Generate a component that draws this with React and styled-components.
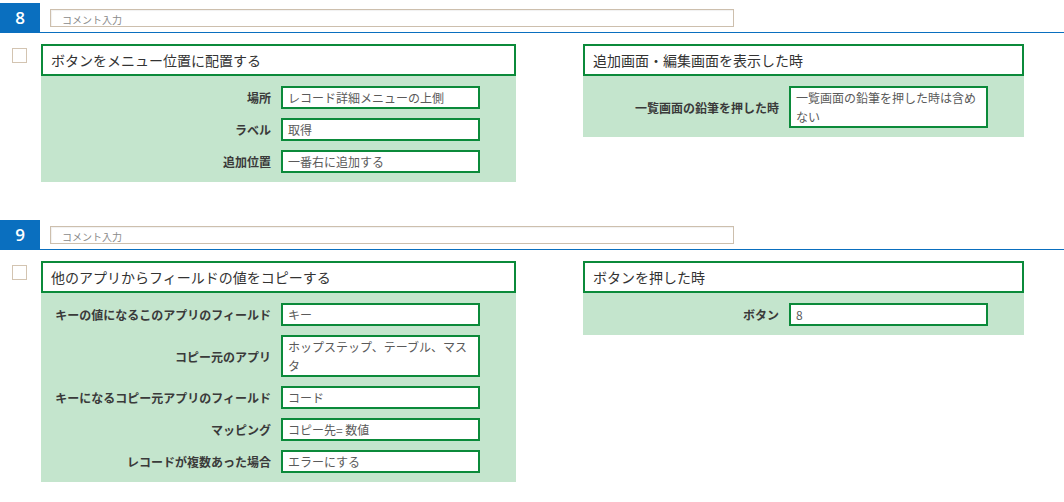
import React from 'react';
import styled, { createGlobalStyle } from 'styled-components';

const GlobalStyle = createGlobalStyle`
  body {
    margin: 0;
    background: #ffffff;
    font-family: 'Noto Sans CJK JP', 'Noto Sans', sans-serif;
    color: #333333;
  }
`;

const sections = [
  {
    no: 8,
    left: {
      title: 'ボタンをメニュー位置に配置する',
      rows: [
        { label: '場所', value: 'レコード詳細メニューの上側' },
        { label: 'ラベル', value: '取得' },
        { label: '追加位置', value: '一番右に追加する' },
      ],
    },
    right: {
      title: '追加画面・編集画面を表示した時',
      rows: [
        {
          label: '一覧画面の鉛筆を押した時',
          value: '一覧画面の鉛筆を押した時は含めない',
        },
      ],
    },
  },
  {
    no: 9,
    left: {
      title: '他のアプリからフィールドの値をコピーする',
      rows: [
        { label: 'キーの値になるこのアプリのフィールド', value: 'キー' },
        { label: 'コピー元のアプリ', value: 'ホップステップ、テーブル、マスタ' },
        { label: 'キーになるコピー元アプリのフィールド', value: 'コード' },
        { label: 'マッピング', value: 'コピー先= 数値' },
        { label: 'レコードが複数あった場合', value: 'エラーにする' },
      ],
    },
    right: {
      title: 'ボタンを押した時',
      rows: [{ label: 'ボタン', value: '8' }],
    },
  },
];

const Card = ({ title, rows, width, $gap }) => (
  <StyledCard $width={width} $gap={$gap}>
    <CardHeader>{title}</CardHeader>
    <CardBody>
      {rows.map((row) => (
        <React.Fragment key={row.label}>
          <FieldLabel>{row.label}</FieldLabel>
          <FieldValue>{row.value}</FieldValue>
        </React.Fragment>
      ))}
    </CardBody>
  </StyledCard>
);

export default function App() {
  return (
    <>
      <GlobalStyle />
      <Page>
        {sections.map((section) => (
          <Section key={section.no}>
            <SectionBar>
              <NumberBox>{section.no}</NumberBox>
              <CommentInput placeholder="コメント入力" />
            </SectionBar>
            <SectionContent>
              <CheckBox />
              <Card {...section.left} width={475} $gap={14} />
              <Card {...section.right} width={441} $gap={67} />
            </SectionContent>
          </Section>
        ))}
      </Page>
    </>
  );
}

const Page = styled.div`
  padding-top: 3px;
  width: 1064px;
`;

const Section = styled.section`
  margin-bottom: 38px;
`;

const SectionBar = styled.div`
  display: flex;
  align-items: center;
  height: 29px;
  border-bottom: 1px solid #0a6fbf;
`;

const NumberBox = styled.div`
  width: 40px;
  height: 100%;
  display: flex;
  align-items: center;
  justify-content: center;
  background: #0a6fbf;
  color: #ffffff;
  font-family: 'Open Sans', 'Noto Sans', sans-serif;
  font-size: 17px;
  font-weight: 600;
`;

const CommentInput = styled.input`
  box-sizing: border-box;
  margin-left: 10px;
  width: 684px;
  height: 18px;
  padding: 3px 0 0 11px;
  border: 1px solid #cdbfad;
  box-shadow: inset 1px 1px 1px rgba(0, 0, 0, 0.06);
  outline: none;
  font-family: 'Noto Sans CJK JP', sans-serif;
  font-size: 10px;
  color: #555555;

  &::placeholder {
    color: #8a8a8a;
  }
`;

const SectionContent = styled.div`
  display: flex;
  align-items: flex-start;
  margin-top: 11px;
`;

const CheckBox = styled.span`
  box-sizing: border-box;
  margin: 4px 0 0 12px;
  width: 15px;
  height: 15px;
  border: 1px solid #d3c4b1;
  background: #ffffff;
`;

const StyledCard = styled.div`
  width: ${({ $width }) => $width}px;
  margin-left: ${({ $gap }) => $gap}px;
`;

const CardHeader = styled.div`
  box-sizing: border-box;
  height: 32px;
  display: flex;
  align-items: center;
  padding-left: 8px;
  border: 2px solid #0b8a3a;
  background: #ffffff;
  font-size: 14px;
  color: #333333;
`;

const CardBody = styled.div`
  display: grid;
  grid-template-columns: 1fr 199px;
  column-gap: 10px;
  row-gap: 9px;
  align-items: center;
  padding: 10px 36px 9px 0;
  background: #c4e5cd;
`;

const FieldLabel = styled.div`
  text-align: right;
  font-size: 12px;
  font-weight: 700;
  color: #3a3a3a;
  white-space: nowrap;
`;

const FieldValue = styled.div`
  box-sizing: border-box;
  min-height: 23px;
  padding: 0 5px;
  border: 2px solid #0b8a3a;
  background: #ffffff;
  font-size: 12px;
  line-height: 19px;
  color: #5a5a5a;
`;
